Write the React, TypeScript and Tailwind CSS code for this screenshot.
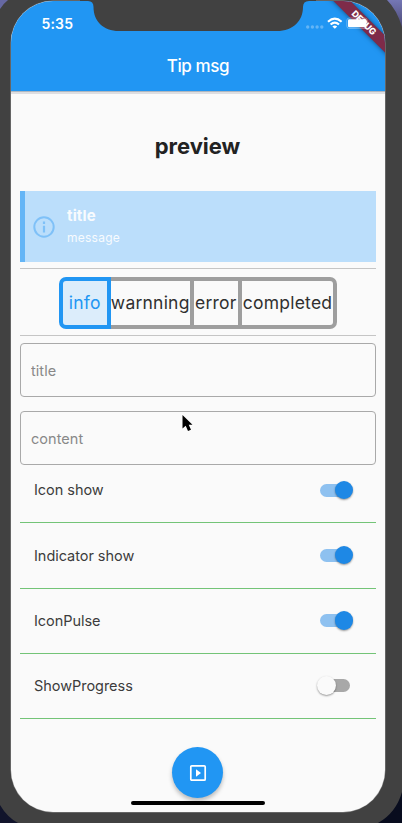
import { useState } from "react";

function DeviceFrame() {
  return (
    <svg className="pointer-events-none absolute inset-0" width="402" height="823" viewBox="0 0 402 823" aria-hidden="true">
      <defs>
        <linearGradient id="wall" x1="0" y1="0" x2="0" y2="1">
          <stop offset="0" stopColor="#7477b5" />
          <stop offset="1" stopColor="#4e4b78" />
        </linearGradient>
      </defs>
      <path d="M0 0H8Q3 4 0 9Z" fill="#6668a3" />
      <path d="M387 0H402V27Q397 10 387 0Z" fill="url(#wall)" />
      <path d="M0 805Q7 817 18 823H0Z" fill="#11142b" />
      <path d="M402 792Q396 813 378 823H402Z" fill="#080c1e" />
    </svg>
  );
}

function Notch() {
  return (
    <svg className="absolute top-0 left-[80px]" width="236" height="32" viewBox="0 0 236 32" aria-hidden="true">
      <path d="M0 0H236V1H229Q223 1 223 7C223 21 213 31 197 31H39C23 31 13.500 21 13.500 7Q13.500 1 8 1H0Z" fill="#414141" />
    </svg>
  );
}

function StatusBar() {
  return (
    <div className="relative z-10 flex h-[44px] items-center justify-between pt-[2px] pr-[9px] pl-[30.500px] text-white">
      <span className="text-[14px] leading-4 font-semibold tracking-[0.15px]">5:35</span>
      <svg width="82" height="20" viewBox="0 0 82 20" aria-hidden="true">
        <g fill="#fff" fillOpacity=".3">
          <circle cx="13.700" cy="13" r="1.700" /><circle cx="18.400" cy="13" r="1.700" />
          <circle cx="23.100" cy="13" r="1.700" /><circle cx="27.800" cy="13" r="1.700" />
        </g>
        <g fill="none" stroke="#fff" strokeWidth="2.200">
          <path d="M34 7.700Q40.800 1.700 47.600 7.700" />
          <path d="M36.600 10.500Q40.800 6.700 45 10.500" />
        </g>
        <path d="M38.400 12.400Q40.800 10.400 43.200 12.400L40.800 14.700Z" fill="#fff" />
        <rect x="52.800" y="4" width="20.500" height="10.500" rx="2.500" fill="none" stroke="#fff" strokeOpacity=".3" />
        <rect x="54" y="5.300" width="18.500" height="8" rx="1.400" fill="#fff" />
      </svg>
    </div>
  );
}

function DebugRibbon() {
  return (
    <div className="absolute top-0 right-0 h-[60px] w-[60px] overflow-hidden">
      <div className="absolute top-[15.500px] left-[-11px] flex h-[11.500px] w-[100px] rotate-45 items-center justify-center bg-[#7e2b49] shadow-[0_0_5px_rgba(0,0,0,.5)]">
        <span className="text-[9px] leading-none font-extrabold tracking-[-0.2px] text-white">DEBUG</span>
      </div>
    </div>
  );
}

const segments = [
  { name: "info", box: "w-[52px] rounded-l-[7px] border-[#2196f3] bg-[#dcedfb] text-[#2196f3]", text: "tracking-[0.2px]" },
  { name: "warnning", box: "w-[79px] border-x-0 border-[#9e9e9e] text-[#303030]", text: "tracking-[0.22px]" },
  { name: "error", box: "w-[52px] border-[#9e9e9e] text-[#303030]", text: "tracking-[0.2px]" },
  { name: "completed", box: "w-[95.500px] rounded-r-[7px] border-l-0 border-[#9e9e9e] text-[#303030]", text: "tracking-[0.25px]" },
];

function Toggle({ label, initial }: { label: string; initial: boolean }) {
  const [on, setOn] = useState(initial);
  return (
    <div className="flex h-[65.250px] flex-col">
      <div className="flex flex-1 items-center justify-between pr-[26px] pl-[14px]">
        <span className="text-[14.500px] tracking-[-0.04px] text-[#3c3c3c]">{label}</span>
        <button
          type="button"
          role="switch"
          aria-checked={on}
          aria-label={label}
          onClick={() => setOn(!on)}
          className={`relative h-[13px] w-[30px] rounded-full ${on ? "bg-[#8ec1f0]" : "bg-[#a8a8a8]"}`}
        >
          <span
            className={`absolute top-[-3px] h-[18.500px] w-[18.500px] rounded-full shadow-[0_1px_2px_rgba(0,0,0,.4)] ${on ? "right-[-3px] bg-[#1e88e5]" : "left-[-3px] bg-[#fafafa]"}`}
          />
        </button>
      </div>
      <svg className="h-px w-full shrink-0" aria-hidden="true"><rect width="100%" height="1" fill="#73c477" /></svg>
    </div>
  );
}

export default function App() {
  return (
    <div className="relative h-[823px] w-[402px] overflow-hidden bg-[#414141] pt-px pl-[11px] font-['Inter','Liberation_Sans',sans-serif]">
      <DeviceFrame />
      <div className="relative h-[811px] w-[374px] overflow-hidden rounded-[42px] bg-[#fafafa] shadow-[0_0_0_.5px_#8a8a8a]">
        <header className="relative h-[90px] bg-[#2196f3] shadow-[0_1px_0_#aeb7c0,0_3px_0_#dedee1]">
          <DebugRibbon />
          <StatusBar />
          <h1 className="flex h-[44px] items-center justify-center text-[17px] font-medium tracking-[-0.4px] text-white">Tip msg</h1>
        </header>

        <main className="px-[9px]">
          <h2 className="flex h-[100px] items-center justify-center pt-[11px] pr-px text-[22px] font-bold text-[#222]">preview</h2>
          <section className="flex h-[71px] items-center border-l-[5px] border-[#64b5f6] bg-[#bbdefb]">
            <svg className="ml-[8px]" width="22" height="22" viewBox="0 0 22 22" aria-hidden="true">
              <circle cx="11" cy="11" r="9.700" fill="none" stroke="#7fc1f8" strokeWidth="2" />
              <path d="M11 9.700V16.500M11 5.600V7.900" stroke="#7fc1f8" strokeWidth="2.200" />
            </svg>
            <div className="ml-[12px] text-[#f8fbfe]">
              <p className="text-[15px] leading-[22px] font-bold tracking-[0.15px]">title</p>
              <p className="text-[12px] leading-[21px] tracking-[0.25px]">message</p>
            </div>
          </section>

          <div className="mt-[6px] flex h-[68px] justify-center border-y border-[#c5c5c5] pt-[8px]">
            <div className="flex h-[52px]">
              {segments.map((s) => (
                <button key={s.name} type="button" className={`flex shrink-0 items-center justify-center overflow-hidden border-4 pt-px text-[17.500px] whitespace-nowrap ${s.box}`}>
                  <span className={s.text}>{s.name}</span>
                </button>
              ))}
            </div>
          </div>

          <div className="mt-[7px] flex flex-col gap-[14px]">
            <input aria-label="title" placeholder="title" className="h-[54px] w-full rounded-[4px] border border-[#a9a9a9] px-[10px] text-[14.500px] tracking-[0.05px] outline-none placeholder:text-[#888]" />
            <input aria-label="content" placeholder="content" className="h-[54px] w-full rounded-[4px] border border-[#a9a9a9] px-[10px] text-[14.500px] tracking-[0.05px] outline-none placeholder:text-[#888]" />
          </div>

          <div className="-mt-[7px]">
            <Toggle label="Icon show" initial={true} />
            <Toggle label="Indicator show" initial={true} />
            <Toggle label="IconPulse" initial={true} />
            <Toggle label="ShowProgress" initial={false} />
          </div>

          <div className="flex justify-center pt-[28px] pr-px">
            <button type="button" aria-label="Play" className="flex h-[51px] w-[51px] items-center justify-center rounded-full bg-[#2196f3] shadow-[0_3px_4px_rgba(0,0,0,.25)]">
              <svg width="18" height="18" viewBox="0 0 18 18" aria-hidden="true">
                <rect x="1.800" y="1.800" width="14.400" height="14.400" rx="1" fill="none" stroke="#fff" strokeWidth="1.700" />
                <path d="M7 5.300V12.700L12 9Z" fill="#fff" />
              </svg>
            </button>
          </div>
        </main>
        <div className="absolute top-[799.500px] left-[120px] h-[4.500px] w-[134px] rounded-full bg-black" />
      </div>
      <Notch />
      <svg className="absolute top-[412px] left-[179px]" width="17" height="22" viewBox="0 0 17 22" aria-hidden="true">
        <path d="M3.500 3V16.500L6.700 13.800L9 19L12 17.700L9.700 12.700H13.500Z" fill="#000" stroke="#fff" strokeWidth="1.200" paintOrder="stroke" />
      </svg>
    </div>
  );
}
